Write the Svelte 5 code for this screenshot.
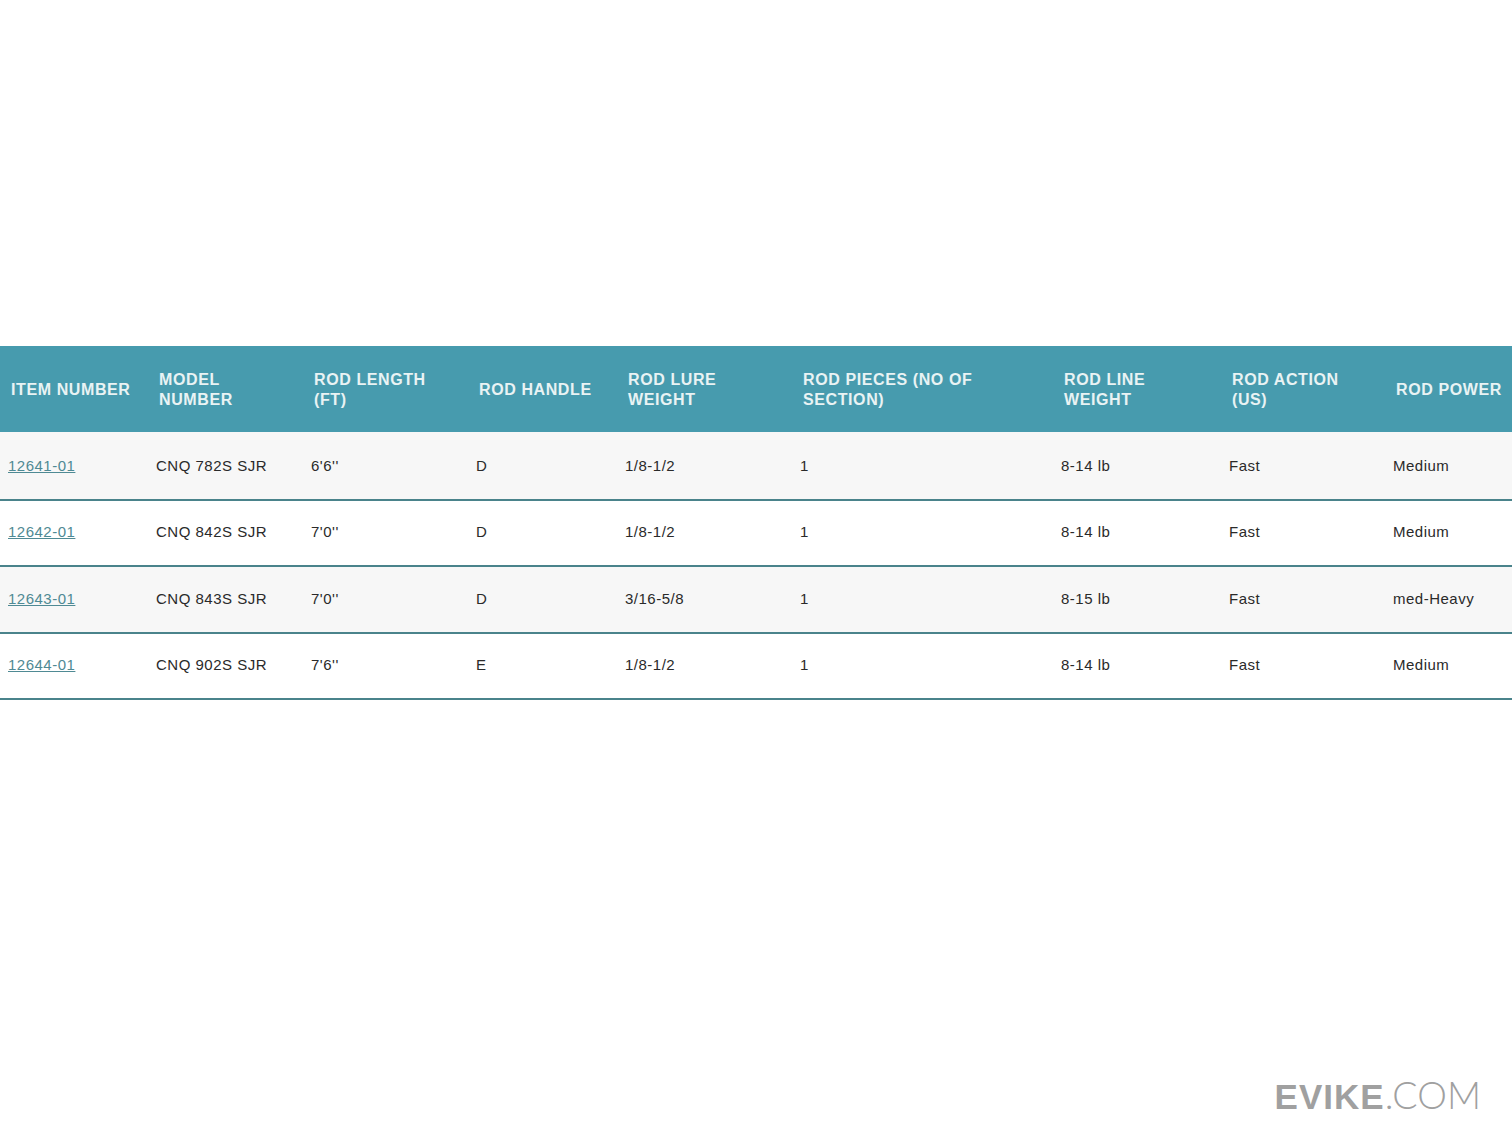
<script>
	const heads = [
		["Item Number"],
		["Model", "Number"],
		["Rod Length", "(ft)"],
		["Rod Handle"],
		["Rod Lure", "Weight"],
		["Rod Pieces (No of", "Section)"],
		["Rod Line", "Weight"],
		["Rod Action", "(US)"],
		["Rod Power"]
	];
	const widths = [148, 155, 165, 149, 175, 261, 168, 164, 127];
	const rows = [
		["12641-01", "CNQ 782S SJR", "6'6''", "D", "1/8-1/2", "1", "8-14 lb", "Fast", "Medium"],
		["12642-01", "CNQ 842S SJR", "7'0''", "D", "1/8-1/2", "1", "8-14 lb", "Fast", "Medium"],
		["12643-01", "CNQ 843S SJR", "7'0''", "D", "3/16-5/8", "1", "8-15 lb", "Fast", "med-Heavy"],
		["12644-01", "CNQ 902S SJR", "7'6''", "E", "1/8-1/2", "1", "8-14 lb", "Fast", "Medium"]
	];
</script>

<div class="page">
	<table>
		<colgroup>
			{#each widths as w}
				<col style="width: {w}px" />
			{/each}
		</colgroup>
		<thead>
			<tr>
				{#each heads as lines}
					<th>
						{#each lines as line}
							<div>{line}</div>
						{/each}
					</th>
				{/each}
			</tr>
		</thead>
		<tbody>
			{#each rows as row}
				<tr>
					{#each row as cell, i}
						<td>
							{#if i === 0}
								<a href="#item">{cell}</a>
							{:else}
								{cell}
							{/if}
						</td>
					{/each}
				</tr>
			{/each}
		</tbody>
	</table>
	<div class="logo"><b>EVIKE</b><span>.COM</span></div>
</div>

<style>
	:global(body) {
		margin: 0;
		background: #fff;
	}
	.page {
		width: 1512px;
		height: 1134px;
		padding-top: 346px;
		box-sizing: border-box;
		overflow: hidden;
		font-family: "Liberation Sans", Arial, sans-serif;
	}
	table {
		width: 1512px;
		table-layout: fixed;
		border-collapse: separate;
		border-spacing: 0;
	}
	th {
		height: 86px;
		padding: 2px 0 0 11px;
		box-sizing: border-box;
		background: #479bae;
		color: #e9f3f4;
		font-size: 16px;
		font-weight: 700;
		line-height: 20px;
		letter-spacing: 0.6px;
		text-align: left;
		text-transform: uppercase;
		white-space: nowrap;
	}
	td {
		height: 66.4px;
		padding: 0 0 2px 8px;
		box-sizing: border-box;
		border-bottom: 2px solid #4a838b;
		color: #2a2a2a;
		font-size: 15px;
		letter-spacing: 0.5px;
		white-space: nowrap;
	}
	tbody tr:first-child td {
		height: 69px;
		padding-bottom: 0;
	}
	tbody tr:nth-child(2) td {
		padding-bottom: 4px;
	}
	tbody tr:nth-child(odd) td {
		background: #f7f7f7;
	}
	a {
		color: #4f8a94;
	}
	.logo {
		display: flex;
		justify-content: flex-end;
		align-items: baseline;
		margin: 373px 31px 0 0;
		color: #a0a0a0;
		font-size: 35px;
		line-height: 44px;
	}
	.logo b {
		font-weight: 700;
		letter-spacing: 1px;
	}
	.logo span {
		font-family: Lato, sans-serif;
		font-weight: 300;
		font-size: 37.5px;
	}
</style>
